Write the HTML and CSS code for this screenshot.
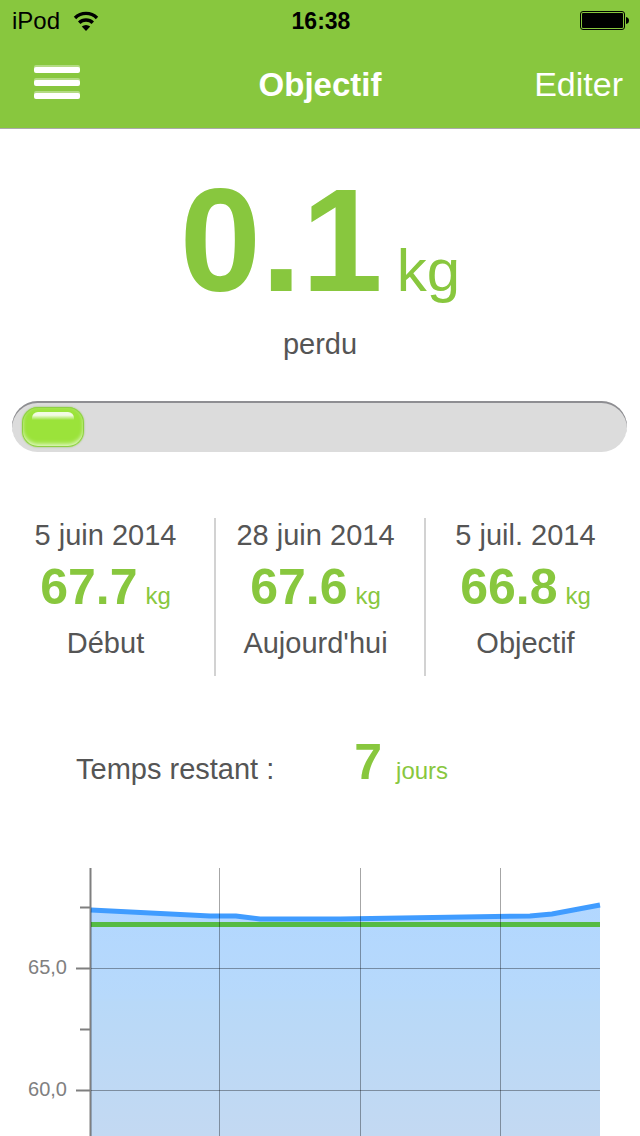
FILE: index.html
```html
<!DOCTYPE html>
<html lang="fr">
<head>
    <meta charset="UTF-8">
    <meta name="viewport" content="width=device-width, initial-scale=1.0">
    <title>Objectif</title>
    <link rel="stylesheet" href="styles.css">
</head>
<body>
    <header>
        <div class="status-bar">
            <div class="device">
                <span>iPod</span>
                <svg width="26" height="20" viewBox="0 0 26 20" aria-hidden="true">
                    <path d="M2 7 A15.5 15.5 0 0 1 24 7" fill="none" stroke="#000" stroke-width="3.4"/>
                    <path d="M6.2 11.8 A9.6 9.6 0 0 1 19.8 11.8" fill="none" stroke="#000" stroke-width="3.4"/>
                    <path d="M13 20 L8.8 15.6 A6.4 6.4 0 0 1 17.2 15.6 Z"/>
                </svg>
            </div>
            <span class="clock">16:38</span>
            <svg class="battery" width="50" height="19" viewBox="0 0 50 19" aria-hidden="true">
                <rect x="0.5" y="0.5" width="44" height="18" rx="2.5" fill="none" stroke="#000"/>
                <rect x="2" y="2" width="41" height="15" rx="1"/>
                <path d="M46 6 Q49 6.5 49 9.5 Q49 12.5 46 13 Z"/>
            </svg>
        </div>
        <nav class="nav-bar">
            <button type="button" class="menu-button" aria-label="Menu">
                <svg width="46" height="34" viewBox="0 0 46 34" aria-hidden="true">
                    <g fill="#b3db83">
                        <rect y="0" width="46" height="6" rx="2"/>
                        <rect y="13" width="46" height="6" rx="2"/>
                        <rect y="26" width="46" height="6" rx="2"/>
                    </g>
                    <g fill="#fff">
                        <rect y="2" width="46" height="6" rx="2"/>
                        <rect y="15" width="46" height="6" rx="2"/>
                        <rect y="28" width="46" height="6" rx="2"/>
                    </g>
                </svg>
            </button>
            <h1>Objectif</h1>
            <button type="button" class="edit-button">Editer</button>
        </nav>
    </header>

    <main>
        <!-- Weight lost so far -->
        <section class="total">
            <div class="total-value"><strong>0.1</strong><span>kg</span></div>
            <p>perdu</p>
        </section>

        <div class="progress" role="progressbar" aria-label="Progression" aria-valuemin="0" aria-valuemax="100" aria-valuenow="11">
            <div class="progress-fill"></div>
        </div>

        <section class="stats">
            <div class="stat">
                <p>5 juin 2014</p>
                <div class="stat-value"><strong>67.7</strong><span>kg</span></div>
                <p>Début</p>
            </div>
            <div class="stat">
                <p>28 juin 2014</p>
                <div class="stat-value"><strong>67.6</strong><span>kg</span></div>
                <p>Aujourd'hui</p>
            </div>
            <div class="stat">
                <p>5 juil. 2014</p>
                <div class="stat-value"><strong>66.8</strong><span>kg</span></div>
                <p>Objectif</p>
            </div>
        </section>

        <section class="remaining">
            <p>Temps restant :</p>
            <div class="remaining-value"><strong>7</strong><span>jours</span></div>
        </section>

        <!-- Weight chart -->
        <svg class="chart" viewBox="0 0 640 268" role="img" aria-label="Courbe de poids">
            <defs>
                <linearGradient id="area" x1="0" y1="0" x2="0" y2="1">
                    <stop offset="0" stop-color="#b2d7ff"/>
                    <stop offset="0.4" stop-color="#b7d9fb"/>
                    <stop offset="0.42" stop-color="#b8d9f8"/>
                    <stop offset="1" stop-color="#c3d9f2"/>
                </linearGradient>
            </defs>
            <path d="M91 42 L210 48 L236 48 L260 51 L340 51 L530 48 L552 46 L600 37 V268 H91 Z" fill="url(#area)"/>
            <path class="weight-line" d="M91 42 L210 48 L236 48 L260 51 L340 51 L530 48 L552 46 L600 37"/>
            <path class="goal-line" d="M91 56.5 H600"/>
            <path class="grid-line" d="M219.5 0 V268 M360.5 0 V268 M500.5 0 V268 M91 100.5 H600 M91 222.5 H600"/>
            <path class="axis-line" d="M90.5 0 V268 M80 39.5 H90 M76 100.5 H90 M80 161.5 H90 M76 222.5 H90"/>
            <text x="67" y="106">65,0</text>
            <text x="67" y="228">60,0</text>
        </svg>
    </main>
</body>
</html>
```
FILE: styles.css
```css
body {
    margin: 0;
    background-color: #fff;
    color: #555;
    font-family: "Liberation Sans", Arial, sans-serif;
    font-size: 29px;
    line-height: 34px;
}
p, h1 {
    margin: 0;
}
svg {
    display: block;
}
button {
    padding: 0;
    border: none;
    background: none;
    color: white;
    font-family: inherit;
    font-size: 34px;
    cursor: pointer;
}
header {
    background-color: #88c73e;
    border-bottom: 1px solid #aaa;
}
.status-bar, .nav-bar {
    display: grid;
    grid-template-columns: 1fr auto 1fr;
    align-items: center;
}
.status-bar {
    height: 41px;
    padding: 0 10px 0 12px;
    color: #000;
    font-size: 24px;
}
.device {
    display: flex;
    align-items: center;
    gap: 13px;
}
.clock {
    font-size: 23px;
    font-weight: bold;
}
.battery {
    justify-self: end;
}
.nav-bar {
    height: 87px;
    padding: 0 17px 0 34px;
}
.menu-button {
    justify-self: start;
    margin-bottom: 6px;
}
.edit-button {
    justify-self: end;
}
h1 {
    /* the side paddings differ, this keeps the title centered */
    margin-right: 17px;
    color: white;
    font-size: 33px;
}

/* Weight lost */
.total {
    padding-top: 37px;
    text-align: center;
}
.total-value, .stat-value, .remaining-value {
    display: flex;
    align-items: baseline;
    justify-content: center;
    color: #88c73e;
}
.total-value {
    gap: 14px;
    margin-bottom: 11px;
    font-size: 60px;
    line-height: 60px;
}
.total-value strong {
    font-size: 146px;
    line-height: 150px;
}

.progress {
    box-sizing: border-box;
    height: 51px;
    margin: 40px 13px 0 12px;
    padding: 6px 10px;
    border-radius: 26px;
    background-color: #dcdcdc;
    box-shadow: inset 0 2px 0 #8e8e92;
}
.progress-fill {
    position: relative;
    width: 62px;
    height: 40px;
    border-radius: 16px;
    background-color: #9be33a;
    box-shadow: inset 0 0 0 1px #8ed044, inset 0 -3px 4px #e2f8c4, inset 0 0 4px #b5e878, 0 0 2px #8fbf5a;
}
/* glossy highlight */
.progress-fill::before {
    content: "";
    position: absolute;
    top: 5px;
    left: 10px;
    right: 10px;
    height: 8px;
    border-radius: 6px 6px 0 0;
    background: linear-gradient(#f2fbe4 40%, #9be33a);
}

/* Start, today and goal */
.stats {
    display: grid;
    grid-template-columns: repeat(3, 1fr);
    margin-top: 66px;
    padding: 0 4px 0 6px;
    text-align: center;
}
.stat {
    padding: 0 9px 16px 0;
    border-right: 2px solid #d2d2d2;
}
.stat:last-child {
    border-right-color: transparent;
}
.stat-value {
    gap: 8px;
    margin: 7px 0 11px;
}
.stat-value, .remaining-value {
    font-size: 24px;
    line-height: 24px;
}
.stat-value strong, .remaining-value strong {
    font-size: 50px;
    line-height: 56px;
}

.remaining {
    display: flex;
    align-items: baseline;
    gap: 80px;
    margin-top: 58px;
    padding-left: 76px;
}
.remaining-value {
    gap: 14px;
}

.chart {
    width: 100%;
    margin-top: 78px;
}
.chart text {
    fill: #808080;
    font-size: 20px;
    text-anchor: end;
}
.weight-line {
    fill: none;
    stroke: #409cff;
    stroke-width: 5px;
}
.goal-line {
    stroke: #55bb44;
    stroke-width: 5px;
}
.grid-line {
    stroke: #000;
    stroke-opacity: 0.35;
}
.axis-line {
    stroke: #000;
    stroke-opacity: 0.5;
    stroke-width: 2px;
}
```
